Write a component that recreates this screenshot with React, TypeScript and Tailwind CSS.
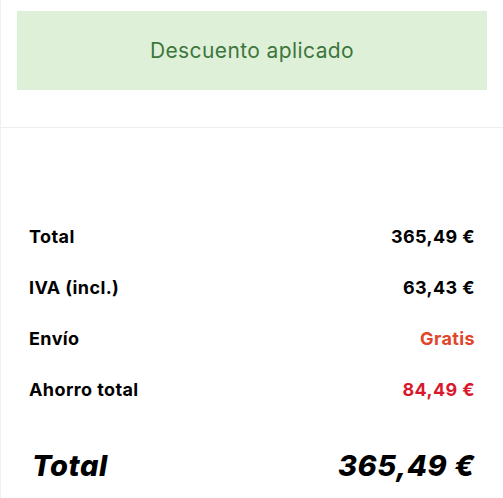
import React from 'react';

const rows = [
  { label: 'Total', value: '365,49 €', color: 'text-black' },
  { label: 'IVA (incl.)', value: '63,43 €', color: 'text-black' },
  { label: 'Envío', value: 'Gratis', color: 'text-[#e0462a]' },
  { label: 'Ahorro total', value: '84,49 €', color: 'text-[#d8182e]' },
];

export default function App() {
  return (
    <div className="w-[503px] h-[498px] bg-white font-['Inter',sans-serif] overflow-hidden border-l border-[#f0f0f0]">
      <div className="px-4 pt-[11px]">
        <div className="h-[79px] bg-[#dff0d8] flex items-center justify-center text-[#3c763d] text-[21px] tracking-[0.4px]">
          Descuento aplicado
        </div>
      </div>
      <div className="mt-[37px] border-t border-[#eeeeee]" />
      <div className="px-[28px] pt-[83px]">
        {rows.map((row) => (
          <div key={row.label} className="flex justify-between items-center h-[51px] text-[18px] font-bold tracking-[0.4px] text-black">
            <span>{row.label}</span>
            <span className={row.color}>{row.value}</span>
          </div>
        ))}
        <div className="flex justify-between items-center mt-[29px] text-[29px] font-extrabold italic tracking-[0.6px] text-black">
          <span className="pl-[3px]">Total</span>
          <span>365,49 €</span>
        </div>
      </div>
    </div>
  );
}
